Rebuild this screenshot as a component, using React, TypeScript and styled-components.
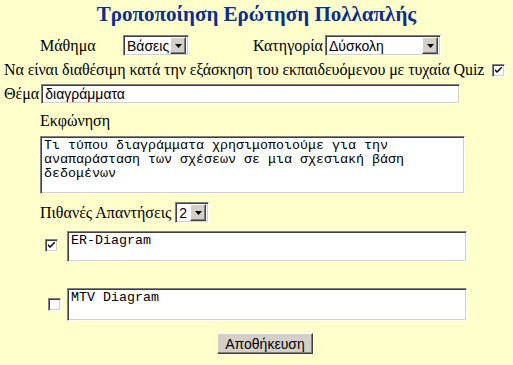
import React from "react";
import styled, { createGlobalStyle, css } from "styled-components";

const GlobalStyle = createGlobalStyle`
  body {
    margin: 0;
    background: #ffffcc;
    font-family: "Liberation Serif", "Times New Roman", serif;
    font-size: 16px;
    color: #000;
  }
`;

const sunken = css`
  border: 1px solid;
  border-color: #808080 #ffffff #ffffff #808080;
  box-shadow: inset 1px 1px 0 #404040, inset -1px -1px 0 #d4d0c8;
  background: #fff;
  box-sizing: border-box;
`;

const raised = css`
  border: 1px solid;
  border-color: #ffffff #404040 #404040 #ffffff;
  box-shadow: inset -1px -1px 0 #808080, inset 1px 1px 0 #d4d0c8;
  background: #d4d0c8;
  box-sizing: border-box;
`;

const Page = styled.div`
  padding: 0 4px;
  width: 513px;
  box-sizing: border-box;
`;

const Title = styled.div`
  text-align: center;
  font-weight: bold;
  font-size: 21px;
  line-height: 28px;
  color: #0a2f8f;
  height: 30px;
`;

const TopRow = styled.div`
  display: grid;
  grid-template-columns: 83px 130px 72px auto;
  align-items: center;
  padding-left: 36px;
  margin-top: 5px;
  height: 21px;
`;

const Label = styled.span`
  white-space: nowrap;
`;

const QuizLabel = styled(Label)`
  letter-spacing: -0.1px;
`;

const QuizRow = styled.div`
  display: flex;
  align-items: center;
  justify-content: space-between;
  margin-top: 7px;
  padding-right: 4px;
  height: 14px;
`;

const ThemeRow = styled.div`
  display: flex;
  align-items: center;
  gap: 2px;
  margin-top: 7px;
`;

const TextInput = styled.input<{ $w: number }>`
  ${sunken};
  width: ${(p) => p.$w}px;
  height: 20px;
  padding: 0 3px;
  font-family: "Liberation Sans", Arial, sans-serif;
  font-size: 14px;
  outline: none;
`;

const Section = styled.div<{ $top: number }>`
  padding-left: 36px;
  margin-top: ${(p) => p.$top}px;
`;

const Area = styled.textarea<{ $w: number; $h: number }>`
  ${sunken};
  display: block;
  width: ${(p) => p.$w}px;
  height: ${(p) => p.$h}px;
  padding: 2px 3px;
  font-family: "Liberation Mono", "Courier New", monospace;
  font-size: 13.33px;
  line-height: 14px;
  resize: none;
  overflow: hidden;
  outline: none;
  color: #000;
`;

const SelectBox = styled.div<{ $w: number }>`
  ${sunken};
  width: ${(p) => p.$w}px;
  height: 21px;
  display: flex;
  align-items: center;
  justify-content: space-between;
  padding: 2px;
  font-family: "Liberation Sans", Arial, sans-serif;
  font-size: 14px;
`;

const SelectText = styled.span`
  padding-left: 1px;
`;

const ArrowBtn = styled.span`
  ${raised};
  width: 16px;
  height: 17px;
  display: flex;
  align-items: center;
  justify-content: center;
`;

const Check = styled.span<{ $x: number }>`
  ${sunken};
  width: 13px;
  height: 13px;
  display: inline-flex;
  align-items: center;
  justify-content: center;
  margin-left: ${(p) => p.$x}px;
  flex: none;
`;

const AnswerRow = styled.div<{ $top: number }>`
  display: flex;
  align-items: flex-end;
  margin-top: ${(p) => p.$top}px;
  padding-left: 41px;
`;

const CheckCell = styled.div`
  width: 22px;
  padding-bottom: 10px;
  display: flex;
`;

const InlineRow = styled.div`
  display: flex;
  align-items: center;
  gap: 4px;
`;

const SaveButton = styled.button`
  ${raised};
  margin: 12px 0 0 213px;
  width: 96px;
  height: 21px;
  padding: 0;
  font-family: "Liberation Sans", Arial, sans-serif;
  font-size: 14px;
  color: #000;
`;

const Arrow = () => (
  <ArrowBtn>
    <svg width="7" height="4" viewBox="0 0 7 4">
      <path d="M0 0h7L3.5 4z" fill="#000" />
    </svg>
  </ArrowBtn>
);

function Select({ value, width }: { value: string; width: number }) {
  return (
    <SelectBox $w={width}>
      <SelectText>{value}</SelectText>
      <Arrow />
    </SelectBox>
  );
}

function Checkbox({ checked, x = 0 }: { checked?: boolean; x?: number }) {
  return (
    <Check $x={x}>
      {checked && (
        <svg width="7" height="7" viewBox="0 0 7 7">
          <path d="M0 2l2 2 5-5v2L2 6 0 4z" fill="#000" />
        </svg>
      )}
    </Check>
  );
}

export default function App() {
  return (
    <>
      <GlobalStyle />
      <Page>
        <Title>Τροποποίηση Ερώτηση Πολλαπλής</Title>
        <TopRow>
          <Label>Μάθημα</Label>
          <Select value="Βάσεις" width={66} />
          <Label>Κατηγορία</Label>
          <Select value="Δύσκολη" width={116} />
        </TopRow>
        <QuizRow>
          <QuizLabel>Να είναι διαθέσιμη κατά την εξάσκηση του εκπαιδευόμενου με τυχαία Quiz</QuizLabel>
          <Checkbox checked />
        </QuizRow>
        <ThemeRow>
          <Label>Θέμα</Label>
          <TextInput $w={419} defaultValue="διαγράμματα" readOnly />
        </ThemeRow>
        <Section $top={8}>
          <Label>Εκφώνηση</Label>
        </Section>
        <Section $top={6}>
          <Area
            $w={425}
            $h={58}
            readOnly
            defaultValue="Τι τύπου διαγράμματα χρησιμοποιούμε για την αναπαράσταση των σχέσεων σε μια σχεσιακή βάση δεδομένων"
          />
        </Section>
        <Section $top={8}>
          <InlineRow>
            <Label>Πιθανές Απαντήσεις</Label>
            <Select value="2" width={34} />
          </InlineRow>
        </Section>
        <AnswerRow $top={8}>
          <CheckCell>
            <Checkbox checked />
          </CheckCell>
          <Area $w={400} $h={31} readOnly defaultValue="ER-Diagram" />
        </AnswerRow>
        <AnswerRow $top={26}>
          <CheckCell>
            <Checkbox x={3} />
          </CheckCell>
          <Area $w={400} $h={33} readOnly defaultValue="MTV Diagram" />
        </AnswerRow>
        <SaveButton>Αποθήκευση</SaveButton>
      </Page>
    </>
  );
}
